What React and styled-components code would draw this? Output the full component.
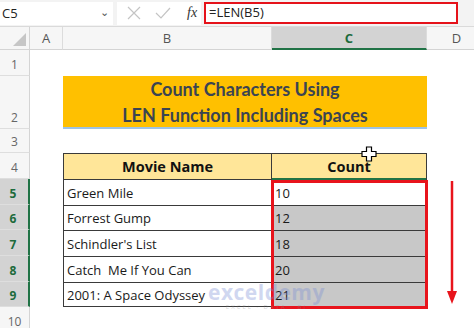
import React from 'react';
import styled, { createGlobalStyle } from 'styled-components';

const GlobalStyle = createGlobalStyle`
  html, body { margin: 0; padding: 0; background: #fff; }
  body { font-family: 'Open Sans', 'Noto Sans', sans-serif; overflow: hidden; }
`;

const movies = [
  { name: 'Green Mile', count: 10 },
  { name: 'Forrest Gump', count: 12 },
  { name: "Schindler's List", count: 18 },
  { name: 'Catch  Me If You Can', count: 20 },
  { name: '2001: A Space Odyssey', count: 21 },
];

const App = () => {
  return (
    <>
      <GlobalStyle />
      <Window>
        <FormulaBar>
          <NameBox>
            <span>C5</span>
            <Chevron>⌄</Chevron>
          </NameBox>
          <IconBox>
            <svg width="14" height="14" viewBox="0 0 14 14">
              <path d="M1 1 L13 13 M13 1 L1 13" stroke="#c4c4c4" strokeWidth="1.2" fill="none" />
            </svg>
            <svg width="16" height="14" viewBox="0 0 16 14">
              <path d="M1 7 L6 12 L15 2" stroke="#c4c4c4" strokeWidth="1.2" fill="none" />
            </svg>
            <Fx>fx</Fx>
          </IconBox>
          <FormulaInput>=LEN(B5)</FormulaInput>
        </FormulaBar>

        <Sheet>
          <Corner>
            <svg width="13" height="13" viewBox="0 0 13 13">
              <polygon points="13,0 13,13 0,13" fill="#c6c6c6" />
            </svg>
          </Corner>
          <ColHead>A</ColHead>
          <ColHead>B</ColHead>
          <ColHead $active>C</ColHead>
          <ColHead>D</ColHead>

          {[1, 2, 3, 4, 5, 6, 7, 8, 9, 10].map((n) => (
            <RowHead key={n} $row={n + 1} $active={n >= 5 && n <= 9}>
              {n}
            </RowHead>
          ))}

          <Title>
            Count Characters Using
            <br />
            LEN Function Including Spaces
          </Title>

          <Table>
            <HeadCell>Movie Name</HeadCell>
            <HeadCell $last>Count</HeadCell>
            {movies.map((m, i) => (
              <React.Fragment key={m.name}>
                <Cell $bottom={i === movies.length - 1}>{m.name}</Cell>
                <Cell $last $selected={i > 0} $bottom={i === movies.length - 1}>
                  {m.count}
                </Cell>
              </React.Fragment>
            ))}
          </Table>

          <RedBox />
        </Sheet>

        <Arrow width="14" height="124" viewBox="0 0 14 124">
          <line x1="7" y1="0" x2="7" y2="112" stroke="#e8141c" strokeWidth="2.5" />
          <polygon points="2,110 12,110 7,123" fill="#e8141c" />
        </Arrow>

        <Cursor width="16" height="16" viewBox="0 0 16 16">
          <path
            d="M5.5 1 H10.5 V5.5 H15 V10.5 H10.5 V15 H5.5 V10.5 H1 V5.5 H5.5 Z"
            fill="#fff"
            stroke="#000"
            strokeWidth="1.2"
          />
        </Cursor>

        <Watermark>
          <Logo>exceldemy</Logo>
          <Tag>EXCEL · DATA · BI</Tag>
        </Watermark>
      </Window>
    </>
  );
};

const Window = styled.div`
  position: relative;
  width: 474px;
  height: 328px;
  overflow: hidden;
  background: #fff;
`;

const FormulaBar = styled.div`
  display: flex;
  align-items: center;
  height: 27px;
  background: #f3f3f3;
  border-bottom: 1px solid #dadada;
  box-sizing: border-box;
`;

const NameBox = styled.div`
  display: flex;
  align-items: center;
  justify-content: space-between;
  width: 113px;
  height: 23px;
  padding: 0 4px 0 2px;
  box-sizing: border-box;
  background: #fff;
  font-size: 13px;
  color: #222;
`;

const Chevron = styled.span`
  font-size: 11px;
  color: #555;
  margin-top: -4px;
`;

const IconBox = styled.div`
  display: flex;
  align-items: center;
  gap: 14px;
  width: 84px;
  height: 23px;
  margin-left: 4px;
  padding-left: 10px;
  box-sizing: border-box;
  background: #fff;
`;

const Fx = styled.span`
  font-family: 'Liberation Serif', serif;
  font-style: italic;
  font-size: 14px;
  color: #333;
  margin-left: 2px;
`;

const FormulaInput = styled.div`
  width: 254px;
  height: 22px;
  margin-left: 3px;
  padding-left: 3px;
  box-sizing: border-box;
  border: 2.5px solid #e5121a;
  background: #fff;
  font-size: 13px;
  line-height: 17px;
  color: #222;
`;

const Sheet = styled.div`
  position: relative;
  display: grid;
  grid-template-columns: 30px 33px 209px 155px 60px;
  grid-template-rows: 23px 26px 53px 24px 26px 26px 25px 26px 26px 25px 26px;
`;

const Corner = styled.div`
  grid-row: 1;
  grid-column: 1;
  display: flex;
  align-items: flex-end;
  justify-content: flex-end;
  padding: 0 3px 3px 0;
  background: #f6f6f6;
  border-bottom: 1px solid #d4d4d4;
  border-right: 1px solid #d4d4d4;
`;

const ColHead = styled.div`
  grid-row: 1;
  display: flex;
  align-items: center;
  justify-content: center;
  font-size: 13px;
  color: ${(p) => (p.$active ? '#1d6b3c' : '#555')};
  font-weight: ${(p) => (p.$active ? 700 : 400)};
  background: ${(p) => (p.$active ? '#d3d3d3' : '#f6f6f6')};
  border-right: 1px solid #dcdcdc;
  border-bottom: ${(p) => (p.$active ? '2px solid #217346' : '1px solid #d4d4d4')};
`;

const RowHead = styled.div`
  grid-column: 1;
  grid-row: ${(p) => p.$row};
  display: flex;
  align-items: flex-end;
  justify-content: center;
  padding-bottom: 2px;
  padding-right: ${(p) => (p.$active ? '2px' : '0')};
  font-size: 12px;
  color: ${(p) => (p.$active ? '#1d6b3c' : '#666')};
  font-weight: ${(p) => (p.$active ? 700 : 400)};
  background: ${(p) => (p.$active ? '#d3d3d3' : '#f6f6f6')};
  border-bottom: 1px solid #dedede;
  border-right: ${(p) => (p.$active ? '2px solid #217346' : '1px solid #d4d4d4')};
`;

const Title = styled.div`
  grid-row: 3;
  grid-column: 3 / 5;
  display: flex;
  flex-direction: column;
  justify-content: center;
  background: #ffc000;
  border-bottom: 2px solid #9dc3e6;
  font-family: Lato, 'Open Sans', sans-serif;
  font-weight: 700;
  font-size: 18px;
  line-height: 26px;
  text-align: center;
  color: #3b4452;
`;

const Table = styled.div`
  grid-row: 5 / 11;
  grid-column: 3 / 5;
  display: grid;
  grid-template-columns: 1fr 154px;
  grid-template-rows: 26px 26px 25px 26px 26px 1fr;
  border: 1.5px solid #3a3a3a;
  box-sizing: border-box;
`;

const HeadCell = styled.div`
  display: flex;
  align-items: center;
  justify-content: center;
  background: #ffe699;
  font-family: 'Open Sans', sans-serif;
  font-weight: 700;
  font-size: 14.5px;
  color: #111;
  border-right: ${(p) => (p.$last ? 'none' : '1px solid #3a3a3a')};
  border-bottom: ${(p) => (p.$last ? '2px solid #217346' : '1px solid #3a3a3a')};
`;

const Cell = styled.div`
  display: flex;
  align-items: center;
  padding-left: 3px;
  white-space: pre;
  font-family: 'Open Sans', sans-serif;
  font-size: 13px;
  color: #1a1a1a;
  background: ${(p) => (p.$selected ? '#c8c8c8' : '#fff')};
  border-right: ${(p) => (p.$last ? 'none' : '1px solid #3a3a3a')};
  border-bottom: ${(p) => (p.$bottom ? 'none' : '1px solid #3a3a3a')};
`;

const RedBox = styled.div`
  position: absolute;
  left: 271px;
  top: 153px;
  width: 157px;
  height: 129px;
  box-sizing: border-box;
  border: 3px solid #e8141c;
  pointer-events: none;
`;

const Arrow = styled.svg`
  position: absolute;
  left: 445px;
  top: 181px;
`;

const Cursor = styled.svg`
  position: absolute;
  left: 361px;
  top: 146px;
`;

const Watermark = styled.div`
  position: absolute;
  left: 208px;
  top: 281px;
  display: flex;
  flex-direction: column;
  align-items: center;
  opacity: 0.35;
  pointer-events: none;
`;

const Logo = styled.span`
  font-family: 'Open Sans', sans-serif;
  font-weight: 700;
  font-size: 21px;
  line-height: 22px;
  color: #7b8fd6;
  letter-spacing: 0.5px;
`;

const Tag = styled.span`
  font-family: 'Open Sans', sans-serif;
  font-size: 6px;
  letter-spacing: 2px;
  color: #8a8a8a;
`;

export default App;
